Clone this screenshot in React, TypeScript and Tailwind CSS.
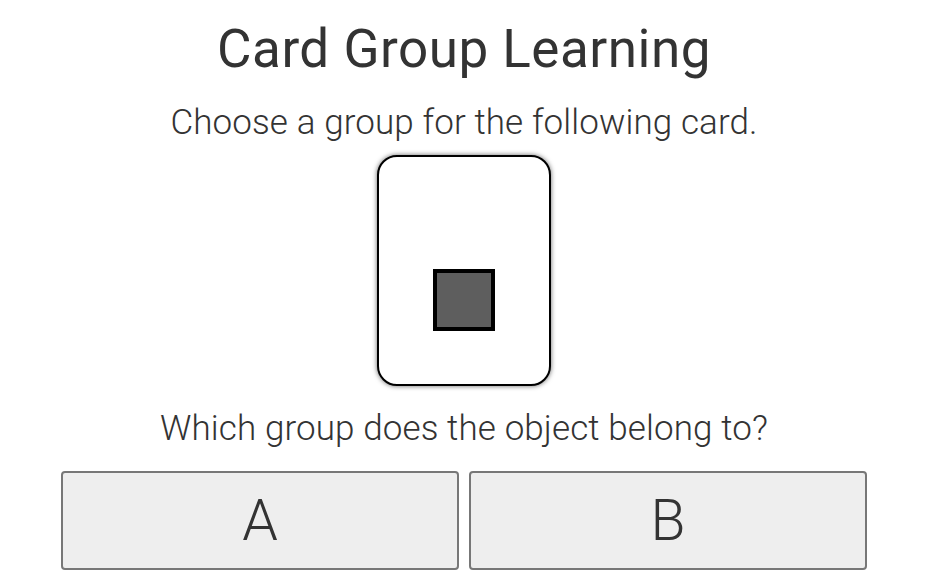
import React from 'react';

const groups = ['A', 'B'];

const App: React.FC = () => {
  return (
    <div className="min-h-screen bg-white text-[#333] font-['Roboto','Liberation_Sans',sans-serif]">
      <div className="ml-[61px] w-[806px] flex flex-col items-center">
        <h1 className="mt-[17px] text-[53px] leading-[64px] font-normal tracking-[0.5px]">Card Group Learning</h1>
        <p className="mt-[22px] text-[35px] leading-[40px] font-light tracking-[0.1px]">Choose a group for the following card.</p>

        <div className="mt-[12px] w-[174px] h-[231px] rounded-[20px] border-2 border-black bg-white shadow-[0_0_5px_rgba(0,0,0,0.6)] flex justify-center">
          <div className="mt-[112px] w-[62px] h-[62px] border-4 border-black bg-[#5e5e5e]" />
        </div>

        <p className="mt-[23px] text-[35px] leading-[40px] font-light tracking-[0.1px]">Which group does the object belong to?</p>

        <div className="mt-[22px] w-full grid grid-cols-2 gap-[10px]">
          {groups.map(g => (
            <button
              key={g}
              type="button"
              className="h-[99px] rounded-[4px] border-2 border-[#777] bg-[#eee] text-[57px] leading-none font-light text-[#333] flex items-center justify-center"
            >
              {g}
            </button>
          ))}
        </div>
      </div>
    </div>
  );
};

export default App;
